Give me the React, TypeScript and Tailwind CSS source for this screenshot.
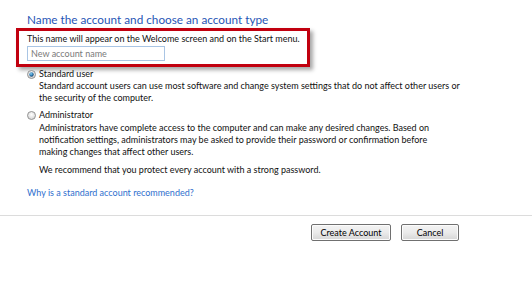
import React from 'react';

function Radio({ checked }: { checked?: boolean }) {
  return (
    <svg width="9" height="9" viewBox="0 0 9 9" className="shrink-0">
      <defs>
        <radialGradient id="ring" cx="50%" cy="40%" r="60%">
          <stop offset="0%" stopColor="#ffffff" />
          <stop offset="100%" stopColor="#d4d4d4" />
        </radialGradient>
        <radialGradient id="dot" cx="40%" cy="35%" r="65%">
          <stop offset="0%" stopColor="#8fd0f2" />
          <stop offset="60%" stopColor="#2f7db3" />
          <stop offset="100%" stopColor="#1a3f66" />
        </radialGradient>
      </defs>
      <circle cx="4.5" cy="4.5" r="4" fill="url(#ring)" stroke="#8b8b8b" strokeWidth="0.9" />
      {checked && <circle cx="4.5" cy="4.5" r="2.2" fill="url(#dot)" />}
    </svg>
  );
}

function OptionRow({ label, checked }: { label: string; checked?: boolean }) {
  return (
    <label className="flex items-center gap-[3px] h-[12px] leading-[12px]">
      <Radio checked={checked} />
      <span>{label}</span>
    </label>
  );
}

function WinButton({ children, width }: { children: React.ReactNode; width: string }) {
  return (
    <button
      className={`${width} h-[17px] rounded-[2px] border border-[#707070] bg-gradient-to-b from-[#f3f3f3] via-[#ebebeb] to-[#d6d6d6] text-[9px] leading-[15px] text-black shadow-[inset_0_0_0_1px_#fcfcfc]`}
    >
      {children}
    </button>
  );
}

export default function App() {
  return (
    <div
      className="w-[532px] h-[300px] bg-white text-[9px] leading-[12px] text-[#111] overflow-hidden whitespace-nowrap"
      style={{ fontFamily: 'Lato, "Noto Sans", sans-serif' }}
    >
      <div className="pl-[27px] pt-[12px] h-[28px]">
        <h1 className="text-[11.75px] leading-[16px] text-[#1f55b5]">
          Name the account and choose an account type
        </h1>
      </div>

      <div className="ml-[16px] w-[294px] h-[39px] border-[3px] border-[#c1000f] shadow-[3px_3px_4px_rgba(0,0,0,0.35)] pl-[8px] pt-[2px]">
        <p>This name will appear on the Welcome screen and on the Start menu.</p>
        <input
          type="text"
          placeholder="New account name"
          className="block mt-[1px] w-[138px] h-[15px] border border-[#a9c5e4] px-[3px] text-[9px] leading-[13px] placeholder:text-[#7a7a7a] outline-none"
        />
      </div>

      <div className="pl-[27px] pt-[1px]">
        <OptionRow label="Standard user" checked />
        <div className="pl-[12px]">
          <p>
            Standard account users can use most software and change system settings that do not affect other users or
            <br />
            the security of the computer.
          </p>
        </div>

        <div className="mt-[5px]">
          <OptionRow label="Administrator" />
        </div>
        <div className="pl-[12px] pt-[1px]">
          <p>
            Administrators have complete access to the computer and can make any desired changes. Based on
            <br />
            notification settings, administrators may be asked to provide their password or confirmation before
            <br />
            making changes that affect other users.
          </p>
          <p className="mt-[6px]">We recommend that you protect every account with a strong password.</p>
        </div>

        <a href="#" className="block mt-[11px] text-[#2f6fce]">
          Why is a standard account recommended?
        </a>
      </div>

      <div className="mt-[16px] border-t border-[#dcdcdc]" />

      <div className="flex justify-end gap-[10px] pr-[73px] pt-[8px]">
        <WinButton width="w-[80px]">Create Account</WinButton>
        <WinButton width="w-[58px]">Cancel</WinButton>
      </div>
    </div>
  );
}
